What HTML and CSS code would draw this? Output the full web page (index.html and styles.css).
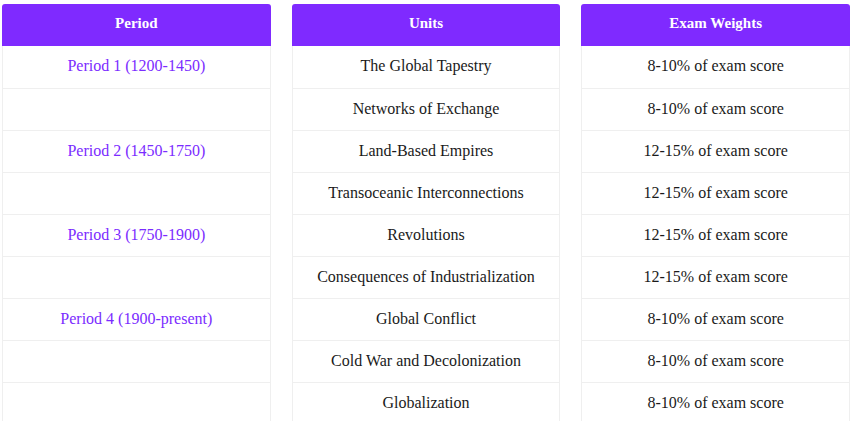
FILE: index.html
```html
<!DOCTYPE html>
<html>
<head>
<meta charset="utf-8">
<link rel="stylesheet" href="styles.css">
</head>
<body>
<div class="tables">
  <div class="col">
    <div class="head">Period</div>
    <div class="cell period">Period 1 (1200-1450)</div>
    <div class="cell"></div>
    <div class="cell period">Period 2 (1450-1750)</div>
    <div class="cell"></div>
    <div class="cell period">Period 3 (1750-1900)</div>
    <div class="cell"></div>
    <div class="cell period">Period 4 (1900-present)</div>
    <div class="cell"></div>
    <div class="cell"></div>
  </div>
  <div class="col">
    <div class="head">Units</div>
    <div class="cell">The Global Tapestry</div>
    <div class="cell">Networks of Exchange</div>
    <div class="cell">Land-Based Empires</div>
    <div class="cell">Transoceanic Interconnections</div>
    <div class="cell">Revolutions</div>
    <div class="cell">Consequences of Industrialization</div>
    <div class="cell">Global Conflict</div>
    <div class="cell">Cold War and Decolonization</div>
    <div class="cell">Globalization</div>
  </div>
  <div class="col">
    <div class="head">Exam Weights</div>
    <div class="cell">8-10% of exam score</div>
    <div class="cell">8-10% of exam score</div>
    <div class="cell">12-15% of exam score</div>
    <div class="cell">12-15% of exam score</div>
    <div class="cell">12-15% of exam score</div>
    <div class="cell">12-15% of exam score</div>
    <div class="cell">8-10% of exam score</div>
    <div class="cell">8-10% of exam score</div>
    <div class="cell">8-10% of exam score</div>
  </div>
</div>
</body>
</html>
```
FILE: styles.css
```css
html, body {
  margin: 0;
  padding: 0;
  background: #ffffff;
}
body {
  font-family: "Liberation Serif", serif;
  font-size: 16px;
  color: #1a1a1a;
}
.tables {
  display: flex;
  gap: 21px;
  width: 848px;
  padding: 4px 0 0 2px;
}
.col {
  flex: 1 1 0;
  display: flex;
  flex-direction: column;
}
.head {
  box-sizing: border-box;
  height: 42px;
  padding-bottom: 3px;
  background: #7f2aff;
  color: #ffffff;
  font-size: 15px;
  font-weight: bold;
  border-radius: 3px 3px 0 0;
  display: flex;
  align-items: center;
  justify-content: center;
}
.cell {
  box-sizing: border-box;
  height: 42px;
  padding-bottom: 2px;
  border: 1px solid #efefef;
  border-top: none;
  display: flex;
  align-items: center;
  justify-content: center;
}
.head + .cell {
  height: 43px;
}
.period {
  color: #7b2cff;
}
```
